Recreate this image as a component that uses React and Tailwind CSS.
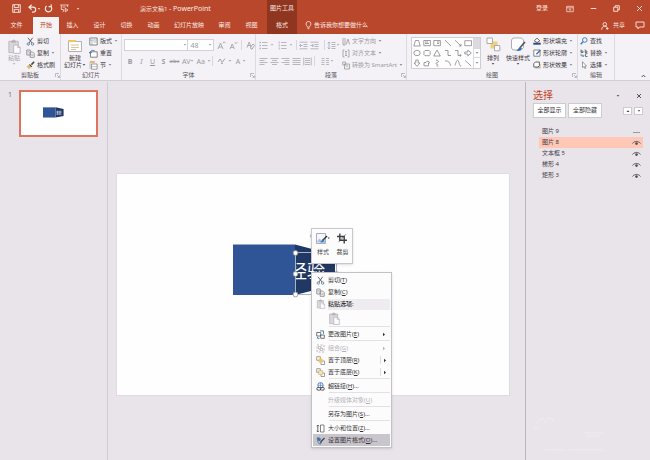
import React from "react";

function Svg({ w = 10, h = 10, vb, className = "", children }) {
  return (
    <svg
      width={w}
      height={h}
      viewBox={vb || `0 0 ${w} ${h}`}
      fill="none"
      stroke="currentColor"
      strokeWidth="0.9"
      className={`shrink-0 ${className}`}
      aria-hidden="true"
    >
      {children}
    </svg>
  );
}

function Caret({ className = "" }) {
  return (
    <Svg w={4} h={4} className={className}>
      <path d="M0.6 1h2.8L2 2.7z" fill="currentColor" fillOpacity="0.8" stroke="none" />
    </Svg>
  );
}

function Launcher() {
  return (
    <button type="button" aria-label="更多选项" className="text-[#a5a2a8]">
      <Svg w={5} h={5}>
        <path d="M0.5 4V0.5H4M2 2l2.2 2.2M4.5 2.5v2h-2" strokeWidth="0.7" />
      </Svg>
    </button>
  );
}

/* ---------- icons ---------- */
const Scissors = () => (
  <Svg w={9} h={9}>
    <path d="M2 0.8L6 6M6.6 0.8L3 6" stroke="#555" />
    <circle cx="2.3" cy="7" r="1.2" stroke="#5a7fa5" />
    <circle cx="6.6" cy="7" r="1.2" stroke="#5a7fa5" />
  </Svg>
);
const Copy = () => (
  <Svg w={9} h={9} className="text-[#8a8890]">
    <path d="M0.8 1h3.4v5H0.8zM4.2 3h2.4L8.2 4.6V8.3H4.2z" fill="#fff" />
    <path d="M1.6 2.6h1.6M1.6 4h1.6M5.2 5.2h2M5.2 6.6h2" strokeWidth="0.6" />
  </Svg>
);
const Brush = () => (
  <Svg w={9} h={9}>
    <path d="M8.2 0.8L5.4 3.6" stroke="#444" strokeWidth="1.5" />
    <path d="M3.8 3l2.4 2.4-1 .8L3 4z" fill="#444" stroke="none" />
    <path d="M2.6 4L5 6.4 3 8.2 0.6 5.4z" fill="#eab95c" stroke="none" />
  </Svg>
);
const Clipboard = ({ s = 16 }) => (
  <Svg w={s} h={s} vb="0 0 16 16" className="text-[#b5b2b8]">
    <path d="M2 2.5h10v12H2z" fill="#dad7dc" />
    <path d="M5 3.5V2h1.2a1 1 0 012 0H9v1.5z" fill="#b5b2b8" />
    <path d="M7 6.5h4.5L14 9v6.3H7z" fill="#fbfafc" />
    <path d="M11.5 6.5V9H14" />
  </Svg>
);
const NewSlide = () => (
  <Svg w={16} h={14}>
    <path d="M1.5 2.5h13v10h-13z" fill="#fff" stroke="#a8a5ab" />
    <path d="M1 1h8v2H1z" fill="#efc55f" stroke="none" />
    <path d="M4 6h8M4 8.5h8M4 10.5h5" stroke="#d0b77f" strokeWidth="0.8" />
  </Svg>
);
const Layout = () => (
  <Svg w={9} h={9}>
    <path d="M0.8 1h7.4v7H0.8z" fill="#fff" stroke="#777" />
    <path d="M0.8 3h7.4M3 3v5M4.5 5h3" stroke="#8a9aaa" strokeWidth="0.7" />
  </Svg>
);
const Reset = () => (
  <Svg w={9} h={9}>
    <path d="M1.5 2.8h6.7v5.4H1.5z" fill="#fff" stroke="#777" />
    <path d="M1 4.2C1 2 3 .8 5.5 1.6M0.2 2.8L1.2 4.6 2.8 3.4" stroke="#3c77b5" />
  </Svg>
);
const Section = () => (
  <Svg w={9} h={9}>
    <path d="M0.8 1h5" stroke="#e0953c" strokeWidth="1.3" />
    <path d="M2.5 3h5.6v5.2H2.5z" fill="#fff" stroke="#777" strokeWidth="0.7" />
    <path d="M2.5 5.6h5.6M1 2v6" stroke="#999" strokeWidth="0.6" />
  </Svg>
);
const Bullets = () => (
  <Svg w={9} h={9}>
    <path d="M0.5 1.5h1.3M0.5 4.5h1.3M0.5 7.5h1.3" strokeWidth="1.3" stroke="#9db0c8" />
    <path d="M3 1.5h5.5M3 4.5h5.5M3 7.5h5.5" strokeWidth="0.8" />
  </Svg>
);
const Numbers = () => (
  <Svg w={9} h={9}>
    <path d="M1.2 0.5v2M1.2 3.5v2M1.2 6.5v2" stroke="#9db0c8" />
    <path d="M3 1.5h5.5M3 4.5h5.5M3 7.5h5.5" strokeWidth="0.8" />
  </Svg>
);
const Indent = ({ flip }) => (
  <Svg w={9} h={9}>
    <path d="M0.5 1.2h8M4.5 3.5h4M4.5 5.5h4M0.5 7.8h8" strokeWidth="0.8" />
    <path d={flip ? "M0.4 4.5h3M2.2 3l1.5 1.5L2.2 6" : "M0.7 4.5h3M2 3L0.5 4.5 2 6"} stroke="#9db0c8" />
  </Svg>
);
const Spacing = () => (
  <Svg w={9} h={9}>
    <path d="M2 1v7M0.7 2.3L2 1l1.3 1.3M0.7 6.7L2 8l1.3-1.3" stroke="#9db0c8" />
    <path d="M4.5 1.5h4M4.5 3.5h4M4.5 5.5h4M4.5 7.5h4" strokeWidth="0.8" />
  </Svg>
);
const Align = ({ d }) => (
  <Svg w={9} h={9}>
    <path d={d} strokeWidth="0.8" />
  </Svg>
);
const Magnifier = () => (
  <Svg w={8} h={8}>
    <circle cx="4.8" cy="3" r="2.3" stroke="#3c77b5" />
    <path d="M3 4.8L0.7 7.3" stroke="#3c77b5" strokeWidth="1.3" />
  </Svg>
);
const Replace = () => (
  <Svg w={8} h={8}>
    <path d="M1 0.5v3h2V2H1M5.2 0.5v3h1.700V2H5.200M7.500 4.700H5.500v2.800h2" stroke="#555" strokeWidth="0.8" />
    <path d="M1 4.800v2h2.600M2.800 5.600L4 6.800 2.800 8" stroke="#3c77b5" strokeWidth="0.8" />
  </Svg>
);
const Pointer = () => (
  <Svg w={8} h={8}>
    <path d="M2.5 0.7v6l1.4-1.2.9 2 .9-.4-.9-2h1.7z" stroke="#777" fill="#fff" strokeWidth="0.7" />
  </Svg>
);
const Fill = () => (
  <Svg w={8} h={8}>
    <path d="M1.3 3.8L4 1.2l2.8 2.6L4 5.5z" stroke="#444" fill="#fff" strokeWidth="0.8" />
    <path d="M0.3 6.7h7.4" stroke="#2c4c7c" strokeWidth="2" />
  </Svg>
);
const Outline = () => (
  <Svg w={8} h={8}>
    <path d="M0.8 1h6.2v6.2H0.8z" stroke="#777" fill="#fff" />
    <path d="M7.4 1L3.4 5.2" stroke="#2f6fb3" strokeWidth="1.3" />
  </Svg>
);
const Effects = () => (
  <Svg w={8} h={8}>
    <path d="M2.2 3H7.6v4.5H2.2z" fill="#b7b4bb" stroke="none" />
    <path d="M0.8 2.6L2.4 1h4v3.6L5 6H.8z" fill="#fff" stroke="#555" />
  </Svg>
);
const BringFront = ({ back }) => (
  <Svg w={9} h={9}>
    <path d="M0.7 0.7h3.6v3.6H0.7zM5 5h3.5v3.5H5z" fill="#fff" stroke="#777" strokeWidth="0.7" />
    <path d="M2.6 2.6h4v4h-4z" fill={back ? "#f6e3b4" : "#efc55f"} stroke={back ? "#d8b66c" : "none"} strokeWidth="0.7" />
  </Svg>
);
const Eye = () => (
  <Svg w={9} h={6} className="text-[#4d4a50]">
    <path d="M0.5 3.5C2.5 0.7 6.5 0.7 8.5 3.5" />
    <circle cx="4.5" cy="3.6" r="1.3" fill="currentColor" stroke="none" />
  </Svg>
);

/* ---------- header ---------- */
const tabs = [
  ["文件", "w-[33px]"],
  ["开始", "w-[26px]"],
  ["插入", "w-[27px]"],
  ["设计", "w-[27px]"],
  ["切换", "w-[27px]"],
  ["动画", "w-[27px]"],
  ["幻灯片放映", "w-[44px]"],
  ["审阅", "w-[27px]"],
  ["视图", "w-[29px]"],
];

function Header() {
  return (
    <header className="bg-[#b9472b] text-[#fbe9e4]">
      <div className="flex h-[17px] items-center">
        <div className="flex w-[267px] shrink-0 items-center pl-3">
          <button type="button" aria-label="保存" className="w-4">
            <Svg w={9} h={9}>
              <path d="M0.7 0.7h7.6v7.6H0.7zM2.3 0.7v2.8h4.4V0.7M2.3 8.3V5.4h4.4v2.9" />
            </Svg>
          </button>
          <button type="button" aria-label="撤消" className="flex w-4 items-center">
            <Svg w={9} h={9}>
              <path d="M3.6 0.8L1 3.2l2.6 2.4M1.2 3.2h4a2.4 2.4 0 010 4.9H4" strokeWidth="1.2" />
            </Svg>
            <Caret />
          </button>
          <button type="button" aria-label="重做" className="w-4">
            <Svg w={9} h={9}>
              <path d="M6.6 2.2A3.200 3.200 0 1 1 2.600 2.100" strokeWidth="1.2" />
              <path d="M4.600 2.600H7.200V0.200" strokeWidth="1.1" />
            </Svg>
          </button>
          <button type="button" aria-label="从头开始" className="w-4">
            <Svg w={9} h={9}>
              <path d="M0.3 1h8.4M1.3 1v4.5h2.4M7.6 1v2M4.2 5.5L2.8 8.2M2.5 3h3M5.3 4.3v3.6L8 6z" strokeWidth="0.8" />
            </Svg>
          </button>
          <Caret />
          <h1 className="ml-[60px] whitespace-nowrap">
            演示文稿1 <span className="text-[7px]">- PowerPoint</span>
          </h1>
        </div>
        <div className="flex h-full w-[30px] shrink-0 items-center justify-center whitespace-nowrap bg-[#8f3520]">
          图片工具
        </div>
        <div className="ml-auto flex items-center pr-[7px]">
          <button type="button" className="mr-[18px]">登录</button>
          <button type="button" aria-label="功能区显示选项" className="mr-4">
            <Svg w={8} h={8}>
              <path d="M0.7 1.3h6.6v5.4H0.7zM0.7 2.8h6.6M4 6V3.8M3 4.7l1-1 1 1" strokeWidth="0.7" />
            </Svg>
          </button>
          <button type="button" aria-label="最小化" className="mr-4">
            <Svg w={7} h={7}>
              <path d="M0.7 3.5h5.6" />
            </Svg>
          </button>
          <button type="button" aria-label="还原" className="mr-4">
            <Svg w={7} h={7}>
              <path d="M0.7 2.2h4.1v4.1H0.7zM2.2 2V0.7h4.1v4.1H5" />
            </Svg>
          </button>
          <button type="button" aria-label="关闭">
            <Svg w={7} h={7}>
              <path d="M1 1l5 5M6 1L1 6" />
            </Svg>
          </button>
        </div>
      </div>
      <nav className="flex h-[17px] items-stretch">
        {tabs.map(([t, w]) => (
          <button
            key={t}
            type="button"
            className={`${w} shrink-0 whitespace-nowrap ${t === "开始" ? "bg-[#f5f3f6] text-[#b9472b]" : ""} ${t === "视图" ? "pr-0.5" : ""} pb-px`}
          >
            {t}
          </button>
        ))}
        <button type="button" className="w-[30px] shrink-0 bg-[#8f3520] pb-px">格式</button>
        <label className="ml-2 flex items-center gap-0.5">
          <Svg w={7} h={9}>
            <path d="M2.4 6.2C2.4 5 1 4.5 1 2.9a2.4 2.4 0 014.9 0c0 1.6-1.4 2.1-1.4 3.3zM2.5 7.7h2" strokeWidth="0.8" />
          </Svg>
          <input
            aria-label="告诉我你想要做什么"
            placeholder="告诉我你想要做什么"
            className="w-16 bg-transparent placeholder:text-[#fbe9e4] outline-none"
          />
        </label>
        <div className="ml-auto flex items-center pr-[5px]">
          <button type="button" className="mr-[10px] flex items-center gap-1">
            <Svg w={8} h={8}>
              <circle cx="3.8" cy="2.3" r="1.8" />
              <path d="M0.6 7.6c.2-2.4 1.6-3.4 3.2-3.4 1 0 1.8.4 2.3 1M6.2 5.2v2.6M5 6.5h2.6" />
            </Svg>
            共享
          </button>
          <button type="button" aria-label="批注">
            <Svg w={10} h={9}>
              <path d="M1 1h8v5H4.5L3 7.8V6H1z" />
            </Svg>
          </button>
        </div>
      </nav>
    </header>
  );
}

/* ---------- ribbon ---------- */
function Group({ label, className, launcher = true, children }) {
  return (
    <section
      aria-label={label}
      className={`${className} flex h-[46px] shrink-0 flex-col border-r border-[#dcd9df] pt-px`}
    >
      <div className="flex h-9 items-start">{children}</div>
      <div className="flex h-[9px] items-center text-[#555158]">
        <span className="w-1.5" />
        <span className="flex-1 text-center">{label}</span>
        <span className="flex w-1.5 justify-center">{launcher && <Launcher />}</span>
      </div>
    </section>
  );
}

function Row({ icon, text, caret, className = "" }) {
  return (
    <button type="button" className={`flex h-3 items-center gap-0.5 whitespace-nowrap ${className}`}>
      {icon}
      <span>{text}</span>
      {caret && <Caret className="text-[#777]" />}
    </button>
  );
}

const Sep = () => <span className="h-2.5 w-px bg-[#d9d6dc]" />;

const fontBtns = [
  ["加粗", "B", "font-bold w-3"],
  ["倾斜", "I", "italic w-[11px]"],
  ["下划线", "U", "underline w-[11px]"],
  ["阴影", "S", "font-bold w-[11px]"],
  ["删除线", "abc", "line-through w-[11px] text-[6px]"],
];

const shapePaths = [
  "M0.8 7L2.5 1.5h3L7.2 7z",
  "M0.8 1.5h6.6v5.2H0.8zM2 3h3M2 4.5h4",
  "M0.8 1.5h6.6v5.2H0.8zM4 3h2.5M4 4.5h2",
  "M1 1.2l6 5.8",
  "M1 1.2l6 5.8M7 4.8V7H4.8",
  "M0.8 1.7h6.8v5H0.8z",
  "M0.8 4a3.2 2.7 0 106.4 0 3.2 2.7 0 10-6.4 0",
  "M2 1.5h4.2l1 1v3.2l-1 1H2l-1-1V2.5z",
  "M4 1L7.3 7H0.7z",
  "M1 1.5h3v5h3",
  "M1 1.5h3v5h3M5.8 5l1.4 1.5L5.8 7.8",
  "M0.8 3h3V1.2L7.3 4 3.8 6.8V5h-3z",
  "M2.8 1v3H1l3 3.3L7 4H5.2V1z",
  "M1 6.8V3.5h2a1.8 1.8 0 013.5.5h-1v2.8z",
  "M3 1.2C6 1 6 3.2 4.2 3.6 2 4 3 6 5 5.2M3.5 7h2",
  "M1 1.8c3.5 0 5 1.4 5.6 5",
  "M1 6.5C3-.5 4.3.5 5 3.8 5.6 7 6.4 7 7.2 6.8",
  "M1.2 1.5l6 5.5",
];

function Ribbon() {
  return (
    <div className="flex h-[47px] border-b border-[#d2ced5] bg-[#f4f2f6] text-[#38353b]">
      <Group label="剪贴板" className="w-[61px]">
        <button type="button" className="ml-1.5 mr-[5px] flex w-4 flex-col items-center text-[#aaa7ad]">
          <span className="pt-1"><Clipboard s={15} /></span>
          <span className="h-2 leading-[8px]">粘贴</span>
          <Caret />
        </button>
        <div>
          <Row icon={<Scissors />} text="剪切" className="-ml-px" />
          <Row icon={<Copy />} text="复制" caret className="-ml-px" />
          <Row icon={<Brush />} text="格式刷" className="-ml-px" />
        </div>
      </Group>
      <Group label="幻灯片" className="w-[61px]" launcher={false}>
        <button type="button" className="ml-0.5 mr-0.5 flex w-6 flex-col items-center pt-1">
          <NewSlide />
          <span className="h-2 pt-px leading-[8px]">新建</span>
          <span className="flex items-center whitespace-nowrap leading-[8px]">
            幻灯片<Caret />
          </span>
        </button>
        <div>
          <Row icon={<Layout />} text="版式" caret />
          <Row icon={<Reset />} text="重置" />
          <Row icon={<Section />} text="节" caret />
        </div>
      </Group>
      <Group label="字体" className="w-[134px]">
        <div className="flex w-full flex-col pl-0.5 pt-1 text-[#9c99a0]">
          <div className="flex h-3 items-center">
            <label className="flex h-3 w-[65px] items-center border border-[#d4d1d7] bg-white">
              <input aria-label="字体名称" className="w-[58px] bg-transparent outline-none" />
              <Caret />
            </label>
            <label className="flex h-3 w-[26px] items-center border border-l-0 border-[#d4d1d7] bg-white">
              <input aria-label="字号" defaultValue="48" className="w-5 bg-transparent pl-0.5 text-[7px] outline-none" />
              <Caret />
            </label>
            <button type="button" aria-label="增大字号" className="ml-[3px] w-3">
              <Svg w={9} h={9}>
                <path d="M1 8L3.500 2 6 8M1.900 6h3.200M6 2.200l1.200-1.400 1.200 1.400" strokeWidth="0.8" />
              </Svg>
            </button>
            <button type="button" aria-label="减小字号" className="w-3">
              <Svg w={9} h={9}>
                <path d="M1 8L3.200 3 5.400 8M1.900 6.400h2.600M5.800 1.200L7 2.600l1.200-1.400" strokeWidth="0.8" />
              </Svg>
            </button>
            <Sep />
            <button type="button" aria-label="清除格式" className="ml-1">
              <Svg w={9} h={9}>
                <path d="M1 6.5L3.2 1l2 5M1.8 4.5h2.6M4.5 6l2.5-3 1.5 1.4L6.2 8H5z" strokeWidth="0.8" />
              </Svg>
            </button>
          </div>
          <div className="flex h-5 items-center text-[7px]">
            {fontBtns.map(([n, t, c]) => (
              <button key={n} type="button" aria-label={n} className={`${c} text-center`}>
                {t}
              </button>
            ))}
            <button type="button" className="ml-0.5 flex items-center">AV<Caret /></button>
            <button type="button" className="ml-0.5 mr-px flex items-center">Aa<Caret className="ml-0.5" /></button>
            <Sep />
            <button type="button" aria-label="突出显示" className="ml-1 flex items-center">
              <Svg w={9} h={8}>
                <path d="M1 5l2-3 2 3M5 5.5L8 1.6M4 6.3h2" />
              </Svg>
              <Caret className="ml-0.5" />
            </button>
            <button type="button" className="ml-1 flex items-center">A<Caret className="ml-0.5" /></button>
          </div>
        </div>
      </Group>
      <Group label="段落" className="w-[151px]">
        <div className="flex w-[86px] shrink-0 flex-col pl-[3px] pt-1 text-[#aaa7ad]">
          <div className="flex h-3 items-center gap-0.5">
            <button type="button" aria-label="项目符号" className="flex items-center"><Bullets /><Caret className="ml-0.5" /></button>
            <button type="button" aria-label="编号" className="ml-0.5 mr-px flex items-center"><Numbers /><Caret className="ml-0.5" /></button>
            <Sep />
            <button type="button" aria-label="减少缩进"><Indent /></button>
            <button type="button" aria-label="增加缩进"><Indent flip /></button>
            <span className="w-px" />
            <Sep />
            <button type="button" aria-label="行距" className="flex items-center"><Spacing /><Caret /></button>
          </div>
          <div className="flex h-5 items-center gap-0.5">
            <button type="button" aria-label="左对齐"><Align d="M0.5 1.5h8M0.5 3.5h5M0.5 5.5h8M0.5 7.5h5" /></button>
            <button type="button" aria-label="居中"><Align d="M0.5 1.5h8M2 3.5h5M0.5 5.5h8M2 7.5h5" /></button>
            <button type="button" aria-label="右对齐"><Align d="M0.5 1.5h8M3.5 3.5h5M0.5 5.5h8M3.5 7.5h5" /></button>
            <button type="button" aria-label="两端对齐"><Align d="M0.5 1.5h8M0.5 3.5h8M0.5 5.5h8M0.5 7.5h8" /></button>
            <button type="button" aria-label="分散对齐"><Align d="M0.8 0.5v8M8.2 0.5v8M2 1.5h5M2 3.5h5M2 5.5h5M2 7.5h5" /></button>
            <Sep />
            <button type="button" aria-label="分栏" className="ml-1 flex items-center">
              <Align d="M0.5 1.5h3M0.5 3.5h3M0.5 5.5h3M0.5 7.5h3M5 1.5h3M5 3.5h3M5 5.5h3M5 7.5h3" />
              <Caret />
            </button>
          </div>
        </div>
        <div className="text-[#9c99a0]">
          <Row icon={<Svg w={8} h={9}><path d="M1 1v7M3 1v7M4.3 7.5L6 2l1.6 5.5M1 8h2" strokeWidth="0.8" /></Svg>} text="文字方向" caret />
          <Row icon={<Svg w={8} h={9}><path d="M2.5 1H1v7h1.5M5.5 1H7v7H5.5M4 2v5M3 3l1-1 1 1M3 6l1 1 1-1" strokeWidth="0.8" /></Svg>} text="对齐文本" caret />
          <Row icon={<Svg w={8} h={9}><path d="M0.7 1h3v3h-3zM2.5 3h5v5h-5zM4 5h2" strokeWidth="0.8" fill="#eee" /></Svg>} text="转换为 SmartArt" caret />
        </div>
      </Group>
      <Group label="绘图" className="w-[171px]">
        <div className="ml-1 mr-1 mt-0.5 flex h-8 w-[70px] shrink-0 border border-[#cfccd2] bg-white text-[#77747a]">
          <div className="grid flex-1 grid-cols-6 grid-rows-3 items-center justify-items-center">
            {shapePaths.map((d, i) => (
              <button key={i} type="button" aria-label={`形状 ${i + 1}`}>
                <Svg w={8} h={8}><path d={d} strokeWidth="0.7" /></Svg>
              </button>
            ))}
          </div>
          <div className="grid w-[7px] grid-rows-3 border-l border-[#d9d6dc]">
            <button type="button" aria-label="上一行" className="bg-[#dddadf]" />
            <button type="button" aria-label="下一行" className="flex items-center justify-center border-y border-[#d9d6dc]"><Caret /></button>
            <button type="button" aria-label="其他" className="flex items-center justify-center"><Caret /></button>
          </div>
        </div>
        <button type="button" className="flex w-4 flex-col items-center pt-0.5">
          <Svg w={15} h={15}>
            <path d="M4.5 4.5h7v7h-7z" fill="#f0cf7a" stroke="none" />
            <path d="M1 1h5.500v5.500H1zM8.5 8.5h5.3v5.3H8.5z" fill="#fff" stroke="#a5a2a8" />
          </Svg>
          <span className="whitespace-nowrap pt-0.5 leading-[8px]">排列</span>
          <Caret />
        </button>
        <button type="button" className="ml-1 mr-0.5 flex w-[26px] flex-col items-center pt-0.5">
          <Svg w={16} h={15}>
            <path d="M3 1h8.5l2 2v7.5l-2.5 2.5H3l-1.5-2V3z" fill="#fff" stroke="#a5a2a8" />
            <path d="M15 5l-4.500 5" stroke="#555" strokeWidth="1.6" />
            <path d="M10.5 9.6C8.5 10 9 12.5 6 13.5c2.500 1 5.500.2 5.800-2.600z" fill="#3672b0" stroke="none" />
          </Svg>
          <span className="whitespace-nowrap pt-0.5 leading-[8px]">快速样式</span>
          <Caret />
        </button>
        <div>
          <Row icon={<Fill />} text="形状填充" caret />
          <Row icon={<Outline />} text="形状轮廓" caret />
          <Row icon={<Effects />} text="形状效果" caret />
        </div>
      </Group>
      <Group label="编辑" className="w-[37px]" launcher={false}>
        <div className="pl-0.5">
          <Row icon={<Magnifier />} text="查找" />
          <Row icon={<Replace />} text="替换" caret />
          <Row icon={<Pointer />} text="选择" caret />
        </div>
      </Group>
      <div className="flex flex-1 items-end justify-end pb-0.5 pr-1">
        <button type="button" aria-label="折叠功能区">
          <Svg w={5} h={4}><path d="M0.7 3l1.800-1.800L4.300 3" strokeWidth="0.9" /></Svg>
        </button>
      </div>
    </div>
  );
}

/* ---------- drawing on the slide ---------- */
function Prism() {
  return (
    <svg viewBox="0 0 104 52" className="block w-full" aria-hidden="true">
      <path d="M62 0.500L102 11v30L62 51z" fill="#203864" />
      <path d="M0 0.500h62V51H0z" fill="#2f5597" />
    </svg>
  );
}

/* ---------- context menu ---------- */
function MenuItem({ icon, text, hot, tail = "", arrow, split, disabled, active }) {
  return (
    <button
      type="button"
      role="menuitem"
      disabled={disabled}
      className={`flex h-3 w-full items-center whitespace-nowrap text-left ${active ? "bg-[#c9c5cc]" : ""} ${disabled ? "text-[#b3b0b6]" : "text-[#333]"}`}
    >
      <span className="flex w-[15px] shrink-0 justify-center">{icon}</span>
      <span>
        {text}
        {hot && <>(<u>{hot}</u>)</>}
        {tail}
      </span>
      {arrow && (
        <span className={`ml-auto mr-0.5 flex h-2 w-2 items-center justify-center ${split ? "border-l border-[#dddadf]" : ""}`}>
          <Svg w={4} h={5}><path d="M1 0.800l2 1.700L1 4.200z" fill="currentColor" stroke="none" /></Svg>
        </span>
      )}
    </button>
  );
}
const MenuSep = () => <hr className="mb-px ml-4 border-t border-[#e4e1e6]" />;

function ContextMenu() {
  return (
    <div role="menu" className="w-[81px] border border-[#c3c0c6] bg-[#fdfcfd] px-px pb-px pt-px shadow-sm">
      <MenuItem icon={<Scissors />} text="剪切" hot="T" />
      <MenuItem icon={<Copy />} text="复制" hot="C" />
      <div className="flex h-3 items-center">
        <span className="flex w-[15px] justify-center"><Clipboard s={10} /></span>
        <span className="flex h-[11px] flex-1 items-center bg-[#eeecf0] font-medium text-[#333]">粘贴选项:</span>
      </div>
      <button type="button" role="menuitem" aria-label="粘贴为图片" className="flex h-4 items-center pl-[15px]">
        <Clipboard s={13} />
      </button>
      <MenuSep />
      <MenuItem
        icon={<Svg w={9} h={9}><path d="M0.700 2.500h4v3.500h-4zM4.700 5h3.600v3.300H4.700z" stroke="#555" fill="#fff" strokeWidth="0.800" /><path d="M4 0.900h3.500v3M1.500 7v1.300h2" stroke="#3c77b5" /></Svg>}
        text="更改图片" hot="E" arrow
      />
      <MenuSep />
      <MenuItem
        icon={<Svg w={9} h={9}><path d="M1 1h7v7H1z" strokeDasharray="2 1.500" /><path d="M2.500 2.500h2.500V5H2.500zM4 4h2.500v2.500H4z" strokeWidth="0.700" /></Svg>}
        text="组合" hot="G" arrow disabled
      />
      <MenuItem icon={<BringFront />} text="置于顶层" hot="R" arrow split />
      <MenuItem icon={<BringFront back />} text="置于底层" hot="K" arrow split />
      <MenuSep />
      <MenuItem
        icon={<Svg w={9} h={9}><circle cx="4.500" cy="3.300" r="2.700" stroke="#3c77b5" /><path d="M2 3.300h5M4.500 0.800v5" stroke="#3c77b5" strokeWidth="0.600" /><rect x="0.800" y="5.500" width="4" height="2.600" rx="1.200" stroke="#444" fill="#fff" /><rect x="4.300" y="5.500" width="4" height="2.600" rx="1.200" stroke="#444" /></Svg>}
        text="超链接" hot="H" tail="..."
      />
      <MenuSep />
      <MenuItem text="升级媒体对象" hot="U" disabled />
      <MenuSep />
      <MenuItem text="另存为图片" hot="S" tail="..." />
      <MenuSep />
      <MenuItem
        icon={<Svg w={9} h={9}><path d="M1.800 1v7M0.800 2.200l1-1.200 1 1.200M0.800 6.800l1 1.200 1-1.200" stroke="#444" strokeWidth="0.800" /><path d="M4.500 1h3.500v7H4.500z" stroke="#777" fill="#fff" /></Svg>}
        text="大小和位置" hot="Z" tail="..."
      />
      <MenuItem
        icon={<Svg w={9} h={9}><path d="M3.500 1L1 2.500l1 4 2.500 1.800" stroke="#777" /><path d="M8.500 2L4.600 6" stroke="#444" strokeWidth="1.300" /><path d="M1 1.500l4 1-1 3-2-1zM4.600 5l1.500 1.500-2.600 2z" fill="#3672b0" stroke="none" /></Svg>}
        text="设置图片格式" hot="O" tail="..." active
      />
    </div>
  );
}

function MiniToolbar() {
  return (
    <div className="flex h-9 w-[42px] justify-center gap-1.5 border border-[#cac7cd] bg-[#fdfcfd] pt-[3px] text-[#444] shadow-sm">
      <button type="button" className="flex flex-col items-center">
        <Svg w={15} h={13}>
          <path d="M1.500 1.500h9v10h-9z" fill="#f5f7fa" stroke="#a5a2a8" />
          <path d="M1.500 10l3-3.500L7 9l2-2 2 4.500z" fill="#a8c4e4" stroke="none" />
          <path d="M12 4L7.500 8.500" stroke="#333" strokeWidth="1.500" />
          <path d="M8.200 7c-1.700.4-1.200 2.500-3.200 3 2 .8 4-.2 4.200-2z" fill="#2f6fb3" stroke="none" />
          <path d="M12.500 5.500h2.400l-1.200 1.400z" fill="#444" stroke="none" />
        </Svg>
        <span className="pt-[3px] leading-[8px]">样式</span>
      </button>
      <button type="button" className="flex flex-col items-center">
        <Svg w={12} h={13} className="text-[#3f3c42]">
          <path d="M3.800 1.500v6.800h7.200M1 4.500h7.200v7" strokeWidth="1.400" />
          <path d="M9.800 2.300L2.500 10.200" strokeWidth="0.600" />
        </Svg>
        <span className="pt-[3px] leading-[8px]">裁剪</span>
      </button>
    </div>
  );
}

/* ---------- workspace ---------- */
const layers = ["图片 9", "图片 8", "文本框 5", "梯形 4", "矩形 3"];

function SelectionPane() {
  return (
    <aside aria-label="选择" className="flex w-[125px] shrink-0 flex-col border-l border-[#bbb7be] px-[7px] pt-1.5 text-[#444047]">
      <div className="flex h-[15px] items-center">
        <h2 className="text-[10px] leading-[15px] text-[#c0452a]">选择</h2>
        <button type="button" aria-label="窗格选项" className="ml-auto mr-4"><Caret /></button>
        <button type="button" aria-label="关闭窗格" className="mr-px">
          <Svg w={6} h={6}><path d="M1 1l4 4M5 1L1 5" /></Svg>
        </button>
      </div>
      <div className="flex h-[15px] items-center">
        <button type="button" className="h-[15px] w-[33px] border border-[#cdcad0] bg-white text-[#333]">全部显示</button>
        <button type="button" className="ml-0.5 h-[15px] w-[34px] border border-[#cdcad0] bg-white text-[#333]">全部隐藏</button>
        <button type="button" aria-label="上移" className="ml-auto flex h-2 w-[9px] items-center justify-center border border-[#cdcad0] bg-white">
          <Svg w={4} h={4}><path d="M0.500 3h3L2 1.200z" fill="currentColor" stroke="none" /></Svg>
        </button>
        <button type="button" aria-label="下移" className="ml-0.5 flex h-2 w-[9px] items-center justify-center border border-[#cdcad0] bg-white">
          <Caret />
        </button>
      </div>
      <ul className="ml-1.5 pt-2">
        {layers.map((n, i) => (
          <li key={n} className={`flex h-[11px] items-center justify-between pl-[3px] pr-0.5 ${i === 1 ? "bg-[#ffc7b5]" : ""}`}>
            <span>{n}</span>
            <button type="button" aria-label={i === 0 ? "显示" : "隐藏"}>
              {i === 0 ? <Svg w={9} h={6} className="text-[#777]"><path d="M1 3.500h7" strokeWidth="0.700" /></Svg> : <Eye />}
            </button>
          </li>
        ))}
      </ul>
      <Svg w={90} h={40} className="mb-1 mt-auto text-[#f1eef3]">
        <path d="M4 8c2-7 8-6 8-1M14 4c3-4 7-1 6 2M1 12h5M50 17h20M53 20h14M12 34h20M36 34h34" />
      </Svg>
    </aside>
  );
}

function Thumbnails() {
  return (
    <aside aria-label="幻灯片缩略图" className="flex w-[108px] shrink-0 items-start border-r border-[#d0ccd3] pl-2 pt-2">
      <span className="w-[11px] text-[7px] text-[#77747a]">1</span>
      <div className="bg-[#dc7460] p-[2px]">
        <button type="button" aria-label="幻灯片 1" className="flex h-[43px] w-[75px] items-center bg-white pb-[3px] pl-[22px]">
          <svg width="21" height="11" viewBox="0 0 104 52" aria-hidden="true">
            <path d="M62 0.500L102 9v34L62 51z" fill="#203864" />
            <path d="M0 0.500h62V51H0z" fill="#2f5597" />
            <path d="M66 20h26M66 27h26M66 34h26M72 18v20M84 18v20" stroke="#cbd5e6" strokeWidth="3" />
          </svg>
        </button>
      </div>
    </aside>
  );
}

function SlideCanvas() {
  return (
    <main className="min-w-0 flex-1 pl-2 pr-[15px] pt-[91px]">
      <div className="relative h-[223px] border border-[#dedbe1] bg-[#fefefe]">
        <div className="absolute left-[116px] top-[70px] w-[104px]">
          <Prism />
        </div>
        <div className="absolute left-[178px] top-[78px] flex h-[43px] w-[42px] items-center overflow-hidden border border-[#aab4c6] text-[18px] leading-none text-white">
          <span className="-ml-[7px] mb-1.5 whitespace-nowrap">经验</span>
        </div>
        <svg width="52" height="68" viewBox="0 0 52 68" className="absolute left-[174px] top-[58px]" fill="#fff" stroke="#8f8c92" strokeWidth="0.800" aria-hidden="true">
          <circle cx="4.500" cy="21" r="2.400" />
          <circle cx="4.500" cy="42" r="2.400" />
          <circle cx="4.500" cy="62.500" r="2.400" />
          <circle cx="45.500" cy="42" r="2.400" />
          <circle cx="22" cy="4" r="2.400" />
        </svg>
        <div className="absolute left-[194px] top-[54px]">
          <MiniToolbar />
        </div>
        <div className="absolute left-[194px] top-[98px]">
          <ContextMenu />
        </div>
      </div>
    </main>
  );
}

export default function App() {
  return (
    <div className="flex min-h-screen flex-col bg-[#e8e4ea] font-['Noto_Sans','Noto_Sans_CJK_SC',sans-serif] text-[6px] leading-[9px]">
      <Header />
      <Ribbon />
      <div className="flex flex-1 items-stretch pt-px">
        <Thumbnails />
        <SlideCanvas />
        <SelectionPane />
      </div>
    </div>
  );
}
